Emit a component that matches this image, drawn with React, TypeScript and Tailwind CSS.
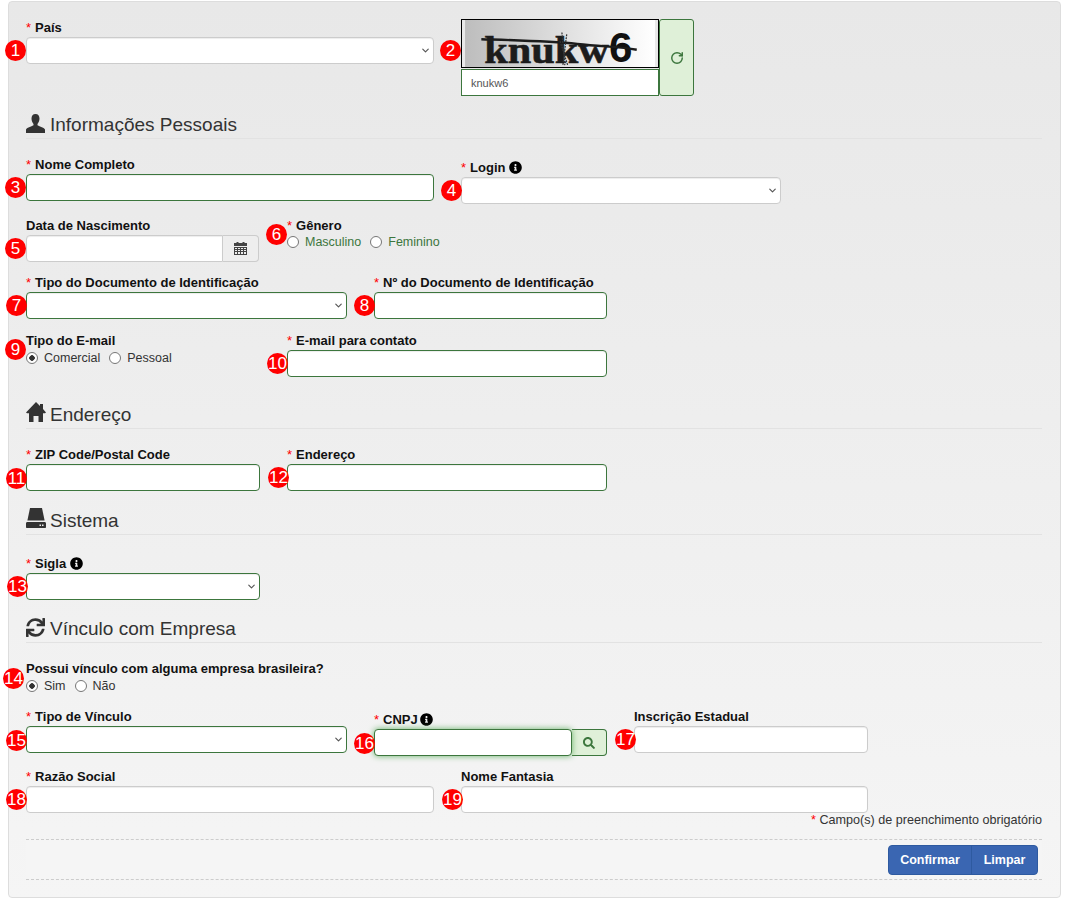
import React from 'react';
import { ChevronDown, RotateCw } from 'lucide-react';
import { FaInfoCircle, FaSearch, FaSync } from 'react-icons/fa';

const OK = 'border-[#3c763d]';
const PLAIN = 'border-[#ccc]';

const Badge = ({ n, className }: { n: number; className: string }) => (
  <span className={`absolute z-10 flex h-[21px] w-[21px] items-center justify-center rounded-full bg-[#ff0000] text-[17px] leading-none text-white ${className}`}>
    {n}
  </span>
);

const Label = ({ text, required, info, tight }: { text: string; required?: boolean; info?: boolean; tight?: boolean }) => (
  <label className="mb-[1px] flex h-[18px] items-center pt-[2px] text-[13px] font-bold leading-4 text-[#111]">
    {required && <span className="mr-[4px] font-normal text-[#ff0000]">*</span>}
    {text}
    {info && <FaInfoCircle size={13} className={`mt-[-2px] text-black ${tight ? 'ml-[2px]' : 'ml-[4px]'}`} />}
  </label>
);

const TextInput = ({ tone = PLAIN, className = '' }: { tone?: string; className?: string }) => (
  <input
    type="text"
    className={`block h-[27px] w-full rounded-[4px] border bg-white px-3 shadow-[inset_0_1px_1px_rgba(0,0,0,0.075)] outline-none ${tone} ${className}`}
  />
);

const SelectBox = ({ tone = PLAIN }: { tone?: string }) => (
  <div className="relative">
    <select className={`block h-[27px] w-full appearance-none rounded-[4px] border bg-white px-3 shadow-[inset_0_1px_1px_rgba(0,0,0,0.075)] outline-none ${tone}`} />
    <ChevronDown size={11} strokeWidth={2.5} className="pointer-events-none absolute right-[3px] top-[8px] text-[#555]" />
  </div>
);

const Radio = ({ label, checked, green }: { label: string; checked?: boolean; green?: boolean }) => (
  <label className={`mr-[9px] flex h-4 items-center text-[12.5px] ${green ? 'text-[#3c763d]' : 'text-[#333]'}`}>
    <input
      type="radio"
      defaultChecked={checked}
      className="mr-[6px] h-[12px] w-[12px] appearance-none rounded-full border border-[#767676] bg-white checked:bg-[radial-gradient(circle,#333_0_2.5px,#fff_3px)]"
    />
    {label}
  </label>
);

const Heading = ({ icon, text, className }: { icon: React.ReactNode; text: string; className: string }) => (
  <div className={`flex h-[30px] items-center border-b border-[#e2e2e2] text-[19px] leading-5 text-[#333] ${className}`}>
    <span className="w-[19px] shrink-0">{icon}</span>
    <span className="ml-[5px] mt-[2px]">{text}</span>
  </div>
);

const UserIcon = () => (
  <svg width="19" height="19" viewBox="0 0 19 19" fill="#333">
    <path d="M9.5 0C6.8 0 5.5 2 5.5 4.6c0 2.2.8 4.2 2 5.4v1.3c-1 .9-6.6 2.3-7.5 4.2V19h19v-3.5c-.9-1.9-6.5-3.3-7.5-4.2V10c1.2-1.2 2-3.2 2-5.4C13.5 2 12.2 0 9.5 0z" />
  </svg>
);

const HomeIcon = () => (
  <svg width="20" height="20" viewBox="0 0 20 20" fill="#333" className="mt-[-3px]">
    <path fillRule="evenodd" d="M10 0l4 4V2h3v5l3 3.4-1 .9H17V20h-4.5v-6h-5v6H3v-8.7H1l-1-.9z" />
  </svg>
);

const DriveIcon = () => (
  <svg width="20" height="20" viewBox="0 0 20 20" fill="#333" className="mt-[-3px]">
    <path d="M4 0h12l2.6 12.5H1.4z" />
    <path fillRule="evenodd" d="M1.4 14h17.2c.8 0 1.4.6 1.4 1.4V19c0 .6-.4 1-1 1H1c-.6 0-1-.4-1-1v-3.6C0 14.6.6 14 1.4 14zM13.5 16.5V18H15v-1.5zm2.5 0V18h1.5v-1.5z" />
  </svg>
);

const CalendarIcon = () => (
  <svg width="13" height="13" viewBox="0 0 13 13" fill="#444">
    <path d="M0 1h2.5V0h2v1h4V0h2v1H13v3H0z" />
    <path fillRule="evenodd" d="M0 5h13v8H0zM1 6v1h2V6zm3 0v1h2V6zm3 0v1h2V6zm3 0v1h2V6zM1 8v1h2V8zm3 0v1h2V8zm3 0v1h2V8zm3 0v1h2V8zM1 10v2h2v-2zm3 0v2h2v-2zm3 0v2h2v-2zm3 0v2h2v-2z" />
  </svg>
);

const Captcha = () => (
  <svg width="198" height="49" viewBox="0 0 198 49" className="block overflow-visible border border-black">
    <defs>
      <linearGradient id="captcha-bg" x1="0" x2="1" y1="0" y2="0">
        <stop offset="0" stopColor="#bdbdbd" />
        <stop offset="1" stopColor="#ffffff" />
      </linearGradient>
    </defs>
    <rect width="198" height="49" fill="url(#captcha-bg)" />
    <text x="20" y="45" fontFamily="'Liberation Serif', serif" fontWeight="700" fontSize="40" fill="#1c1c1c" stroke="#1c1c1c" strokeWidth="0.6" textLength="130" lengthAdjust="spacingAndGlyphs">
      knukw
    </text>
    <text x="150" y="44" fontFamily="'Liberation Sans', sans-serif" fontWeight="700" fontSize="44" fill="#111">
      6
    </text>
    <path d="M17 20c30 1 70 2 100 5s45 3 62 6" stroke="#1c1c1c" strokeWidth="2.5" fill="none" />
    <path d="M101 13l3 34M106 15l-4 32M99 22l8 25" stroke="#333" strokeWidth="1.3" fill="none" strokeDasharray="2 1" />
  </svg>
);

export default function App() {
  return (
    <div className="h-[915px] bg-white pl-2 pt-[1px] font-['Liberation_Sans',Arial,sans-serif]">
      <form className="h-[897px] w-[1053px] rounded-[4px] border border-[#ddd] bg-gradient-to-b from-[#e8e8e8] to-[#f5f5f5] pl-[17px] pr-[18px] pt-[16px]">
        <div className="flex items-start">
          <div className="relative w-[408px]">
            <Badge n={1} className="left-[-21px] top-[22px]" />
            <Label text="País" required />
            <SelectBox />
          </div>
          <div className="relative ml-[27px] mt-[1px] flex">
            <Badge n={2} className="left-[-21px] top-[21px]" />
            <div className="w-[198px]">
              <Captcha />
              <input type="text" defaultValue="knukw6" className={`mt-[1px] block h-[27px] w-full border bg-white px-[9px] text-[11px] text-[#555] outline-none ${OK}`} />
            </div>
            <button type="button" className={`flex h-[77px] w-[35px] items-center justify-center rounded-[3px] border bg-[#dff0d8] text-[#3c763d] ${OK}`}>
              <RotateCw size={14} strokeWidth={2.5} />
            </button>
          </div>
        </div>

        <Heading icon={<UserIcon />} text="Informações Pessoais" className="mt-[13px]" />

        <div className="mt-4 flex items-start">
          <div className="relative w-[408px]">
            <Badge n={3} className="left-[-21px] top-[22px]" />
            <Label text="Nome Completo" required />
            <TextInput tone={OK} />
          </div>
          <div className="relative ml-[27px] mt-[3px] w-[320px]">
            <Badge n={4} className="left-[-20px] top-[22px]" />
            <Label text="Login" required info />
            <SelectBox />
          </div>
        </div>

        <div className="mt-3 flex items-start">
          <div className="relative w-[233px]">
            <Badge n={5} className="left-[-21px] top-[22px]" />
            <Label text="Data de Nascimento" />
            <div className="flex">
              <TextInput className="rounded-r-none" />
              <button type="button" className="flex h-[27px] w-[36px] shrink-0 items-center justify-center rounded-r-[4px] border border-l-0 border-[#ccc] bg-[#eee]">
                <CalendarIcon />
              </button>
            </div>
          </div>
          <div className="relative ml-[28px]">
            <Badge n={6} className="left-[-21px] top-[8px]" />
            <Label text="Gênero" required />
            <div className="mt-[-1px] flex">
              <Radio label="Masculino" green />
              <Radio label="Feminino" green />
            </div>
          </div>
        </div>

        <div className="mt-[11px] flex items-start">
          <div className="relative w-[321px]">
            <Badge n={7} className="left-[-20px] top-[22px]" />
            <Label text="Tipo do Documento de Identificação" required />
            <SelectBox tone={OK} />
          </div>
          <div className="relative ml-[27px] w-[233px]">
            <Badge n={8} className="left-[-20px] top-[22px]" />
            <Label text="Nº do Documento de Identificação" required />
            <TextInput tone={OK} />
          </div>
        </div>

        <div className="mt-3 flex items-start">
          <div className="relative w-[234px]">
            <Badge n={9} className="left-[-21px] top-[8px]" />
            <Label text="Tipo do E-mail" />
            <div className="flex">
              <Radio label="Comercial" checked />
              <Radio label="Pessoal" />
            </div>
          </div>
          <div className="relative ml-[27px] w-[320px]">
            <Badge n={10} className="left-[-20px] top-[22px]" />
            <Label text="E-mail para contato" required />
            <TextInput tone={OK} />
          </div>
        </div>

        <Heading icon={<HomeIcon />} text="Endereço" className="mt-[22px]" />

        <div className="mt-4 flex items-start">
          <div className="relative w-[234px]">
            <Badge n={11} className="left-[-20px] top-[23px]" />
            <Label text="ZIP Code/Postal Code" required />
            <TextInput tone={OK} />
          </div>
          <div className="relative ml-[27px] w-[320px]">
            <Badge n={12} className="left-[-19px] top-[22px]" />
            <Label text="Endereço" required />
            <TextInput tone={OK} />
          </div>
        </div>

        <Heading icon={<DriveIcon />} text="Sistema" className="mt-[14px]" />

        <div className="relative mt-[19px] w-[234px]">
          <Badge n={13} className="left-[-19px] top-[22px]" />
          <Label text="Sigla" required info />
          <SelectBox tone={OK} />
        </div>

        <Heading icon={<FaSync size={19} className="text-[#333]" />} text="Vínculo com Empresa" className="mt-[13px]" />

        <div className="relative mt-4">
          <Badge n={14} className="left-[-23px] top-[9px]" />
          <Label text="Possui vínculo com alguma empresa brasileira?" />
          <div className="flex">
            <Radio label="Sim" checked />
            <Radio label="Não" />
          </div>
        </div>

        <div className="mt-[13px] flex items-start">
          <div className="relative w-[321px]">
            <Badge n={15} className="left-[-20px] top-[23px]" />
            <Label text="Tipo de Vínculo" required />
            <SelectBox tone={OK} />
          </div>
          <div className="relative ml-[27px] mt-[3px] flex w-[233px] flex-col">
            <Badge n={16} className="left-[-20px] top-[23px]" />
            <Label text="CNPJ" required info tight />
            <div className="flex">
              <TextInput tone={OK} className="relative z-[1] shadow-[0_0_6px_#67b168]!" />
              <button type="button" className={`flex h-[27px] w-[35px] shrink-0 items-center justify-center rounded-r-[4px] border border-l-0 bg-[#dff0d8] text-[#3c763d] ${OK}`}>
                <FaSearch size={12} />
              </button>
            </div>
          </div>
          <div className="relative ml-[27px] w-[234px]">
            <Badge n={17} className="left-[-19px] top-[22px]" />
            <Label text="Inscrição Estadual" />
            <TextInput />
          </div>
        </div>

        <div className="mt-[11px] flex items-start">
          <div className="relative w-[408px]">
            <Badge n={18} className="left-[-20px] top-[22px]" />
            <Label text="Razão Social" required />
            <TextInput />
          </div>
          <div className="relative ml-[27px] w-[407px]">
            <Badge n={19} className="left-[-19px] top-[22px]" />
            <Label text="Nome Fantasia" />
            <TextInput />
          </div>
        </div>

        <p className="h-[14px] text-right text-[12.6px] leading-[14px] text-[#333]">
          <span className="text-[#ff0000]">*</span> Campo(s) de preenchimento obrigatório
        </p>

        <div className="mt-3 flex h-[41px] justify-end border-y border-dashed border-[#ccc] bg-[#f5f5f5] pr-1 pt-[5px]">
          <div className="flex h-[30px] overflow-hidden rounded-[4px] border border-[#2e5aa0] bg-[#3a66b2] text-[12.5px] font-bold text-white">
            <button type="button" className="w-[83px] border-r border-[#2e5aa0]">Confirmar</button>
            <button type="button" className="w-[65px]">Limpar</button>
          </div>
        </div>
      </form>
    </div>
  );
}
